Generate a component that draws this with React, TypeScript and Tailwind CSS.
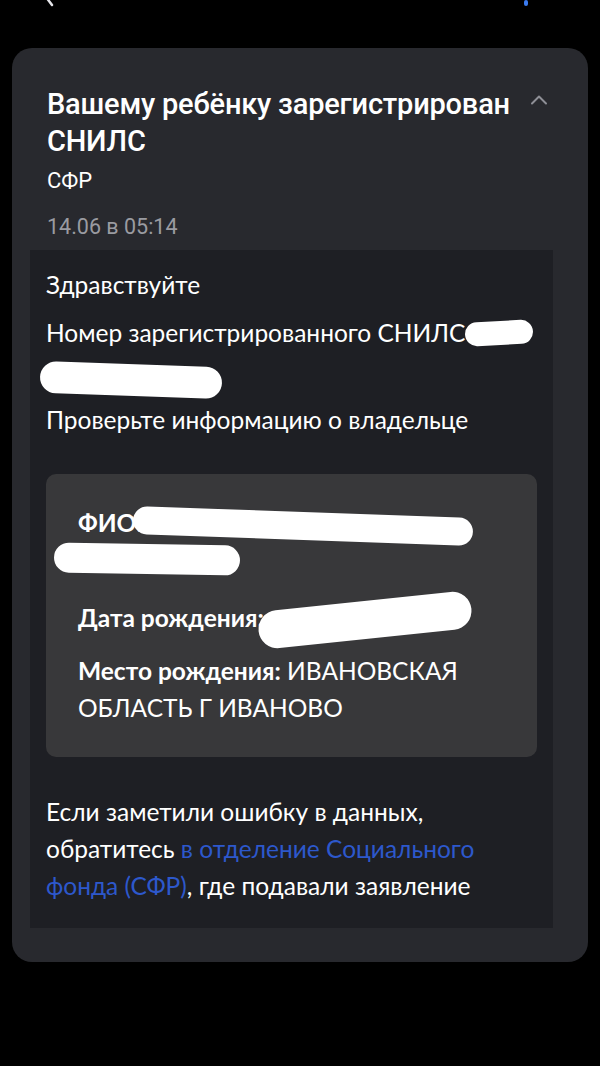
import React from "react";

const Blob: React.FC<{ className: string }> = ({ className }) => (
  <span className={`inline-block bg-white rounded-full align-middle ${className}`} />
);

export default function App() {
  return (
    <div className="min-h-[1066px] bg-black pb-[105px]">
      {/* cut-off top bar */}
      <div className="h-[7px] overflow-hidden flex justify-between pl-[44px] pr-[72px]">
        <svg width="10" height="20" viewBox="0 0 10 20" className="-mt-[13px]">
          <path d="M8 2L2 10l6 8" stroke="#e5e5ea" strokeWidth="2.5" fill="none" strokeLinecap="round" />
        </svg>
        <span className="w-[4px] h-[6px] bg-[#3a7bf0] rounded-sm" />
      </div>

      <div className="mx-[12px] mt-[41px] rounded-[20px] bg-[#28292e] pt-[38px] pb-[34px]">
        <div className="pl-[35px] pr-[40px] font-['Roboto',sans-serif]">
          <div className="flex justify-between items-start">
            <h1 className="text-[29px] leading-[37px] font-medium text-white tracking-[-0.2px]">
              Вашему ребёнку зарегистрирован СНИЛС
            </h1>
            <svg width="18" height="12" viewBox="0 0 18 12" className="mt-[8px] ml-[10px] shrink-0">
              <path d="M2 9.5L9 2.5l7 7" stroke="#8e8f96" strokeWidth="2" fill="none" strokeLinecap="round" strokeLinejoin="round" />
            </svg>
          </div>
          <div className="mt-[6px] text-[22px] leading-[30px] text-white">СФР</div>
          <div className="mt-[16px] text-[21.5px] leading-[30px] text-[#9a9ba1]">14.06 в 05:14</div>
        </div>

        <div className="mt-[8px] ml-[18px] mr-[35px] bg-[#1e1f24] pt-[15px] pb-[24px] font-['Lato',sans-serif] text-white text-[24.5px]">
          <div className="px-[16px]">
            <p className="leading-[40px]">Здравствуйте</p>
            <p className="mt-[6px] leading-[44px]">
              Номер зарегистрированного СНИЛС
              <Blob className="w-[68px] h-[24px] -rotate-3 -mt-[6px]" />{" "}
              <Blob className="w-[182px] h-[32px] -ml-[6px] rotate-2" />
            </p>
            <p className="mt-[1px] leading-[40px]">Проверьте информацию о владельце</p>
          </div>

          <div className="mt-[34px] mx-[16px] rounded-[10px] bg-[#38383a] pl-[32px] pr-[24px] pt-[33px] pb-[31px]">
            <p className="leading-[32px]">
              <span className="font-bold">ФИО:</span>
              <Blob className="w-[340px] h-[28px] -ml-[10px] rotate-2" />{" "}
              <Blob className="w-[186px] h-[30px] -ml-[24px] rotate-1" />
            </p>
            <p className="mt-[24px] leading-[40px]">
              <span className="font-bold">Дата рождения:</span>
              <Blob className="w-[214px] h-[38px] -ml-[6px] -rotate-6" />
            </p>
            <p className="mt-[13px] leading-[37px]">
              <span className="font-bold">Место рождения:</span> ИВАНОВСКАЯ ОБЛАСТЬ Г ИВАНОВО
            </p>
          </div>

          <p className="mt-[36px] px-[16px] leading-[37px]">
            Если заметили ошибку в данных, обратитесь{" "}
            <span className="text-[#2d58cc]">в отделение Социального фонда (СФР)</span>, где подавали заявление
          </p>
        </div>
      </div>
    </div>
  );
}
